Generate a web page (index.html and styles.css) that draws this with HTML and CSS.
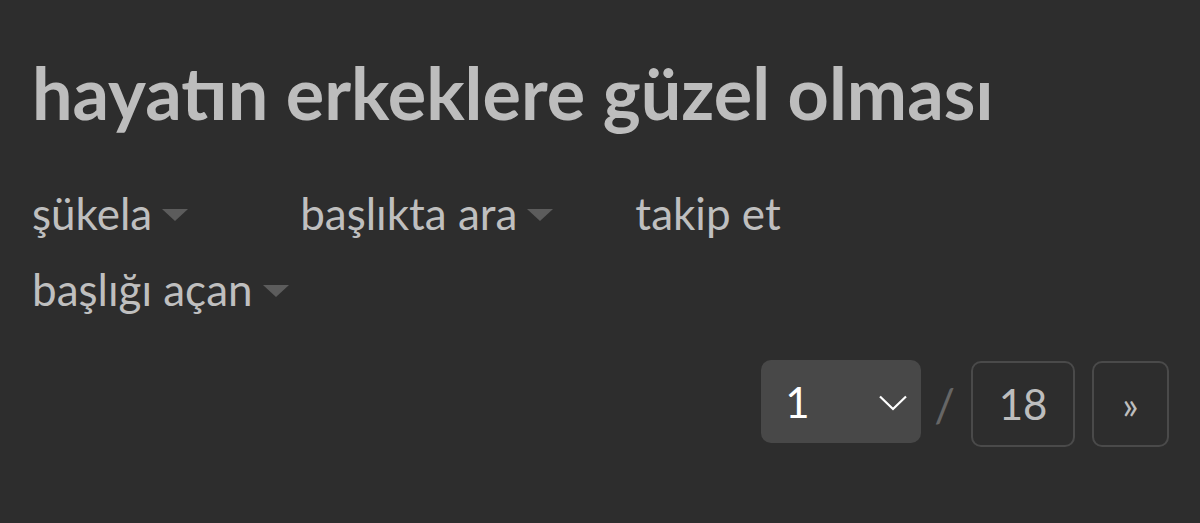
FILE: index.html
```html
<!DOCTYPE html>
<html lang="tr">
<head>
  <meta charset="UTF-8">
  <title>hayatın erkeklere güzel olması</title>
  <link rel="stylesheet" href="styles.css">
</head>
<body>
  <main class="topic">
    <h1 class="topic-title">hayatın erkeklere güzel olması</h1>

    <div class="topic-menu">
      <div class="menu-row">
        <a href="#" class="menu-item dropdown first">şükela</a>
        <a href="#" class="menu-item dropdown second">başlıkta ara</a>
        <a href="#" class="menu-item">takip et</a>
      </div>
      <div class="menu-row">
        <a href="#" class="menu-item dropdown">başlığı açan</a>
      </div>
    </div>

    <div class="pager">
      <div class="page-select">
        <span>1</span>
        <svg class="chevron" width="28" height="16" viewBox="0 0 28 16">
          <polyline points="1,1.5 14,14 27,1.5" fill="none" stroke="#fff" stroke-width="2.2"/>
        </svg>
      </div>
      <span class="page-sep">/</span>
      <a href="#" class="page-box last">18</a>
      <a href="#" class="page-box next">&raquo;</a>
    </div>
  </main>
</body>
</html>
```
FILE: styles.css
```css
body {
  margin: 0;
  padding: 0;
  background-color: #2d2d2d;
  color: #bdbdbd;
  font-family: Lato, 'Noto Sans', sans-serif;
}

.topic {
  padding: 49px 31px 0 32px;
}

.topic-title {
  margin: 0;
  font-size: 72px;
  font-weight: bold;
  line-height: 86px;
  color: #bdbdbd;
  white-space: nowrap;
}

.topic-menu {
  margin-top: 40px;
}

.menu-row {
  display: flex;
  align-items: center;
  height: 76px;
}

.menu-item {
  color: #bfbfbf;
  text-decoration: none;
  font-size: 44px;
  line-height: 76px;
  display: flex;
  align-items: center;
}

.menu-item.dropdown::after {
  content: '';
  display: inline-block;
  margin-left: 10px;
  margin-top: 4px;
  border-left: 13.5px solid transparent;
  border-right: 13.5px solid transparent;
  border-top: 12px solid #5c5c5c;
}

.menu-item.first {
  margin-right: 112px;
}

.menu-item.second {
  margin-right: 82px;
}

.pager {
  display: flex;
  justify-content: flex-end;
  align-items: flex-start;
  margin-top: 33px;
}

.page-select {
  width: 160px;
  height: 83px;
  box-sizing: border-box;
  background-color: #484848;
  border-radius: 10px;
  color: #fff;
  font-size: 42px;
  display: flex;
  align-items: center;
  justify-content: space-between;
  padding: 0 14px 0 24px;
}

.chevron {
  margin-top: 2px;
}

.page-sep {
  align-self: center;
  color: #666;
  font-size: 46px;
  margin: 2px 16px 0 13px;
}

.page-box {
  height: 86px;
  margin-top: 1px;
  box-sizing: border-box;
  border: 2px solid #4a4a4a;
  border-radius: 10px;
  color: #bdbdbd;
  text-decoration: none;
  font-size: 42px;
  display: flex;
  align-items: center;
  justify-content: center;
}

.page-box.last {
  width: 104px;
}

.page-box.next {
  width: 77px;
  margin-left: 17px;
  font-size: 38px;
}
```
